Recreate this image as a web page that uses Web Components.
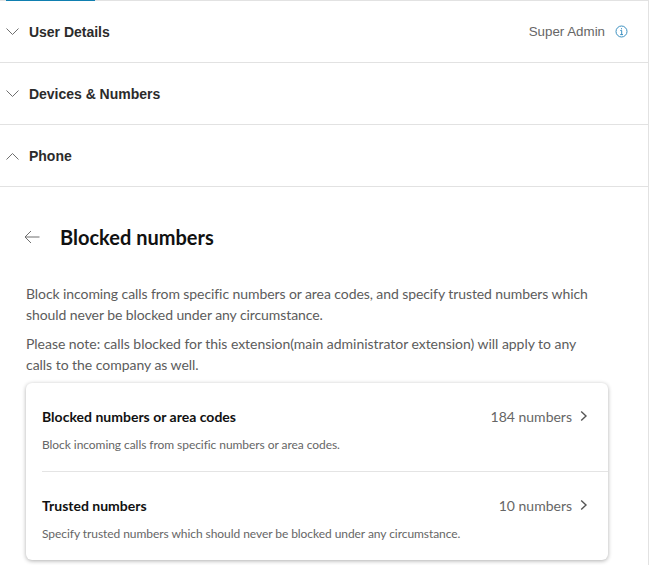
<!DOCTYPE html>
<html><head><meta charset="utf-8"><style>
html,body{margin:0;padding:0;background:#fff;overflow:hidden}
body{width:655px;height:565px}
</style></head><body>
<app-page>
  <acc-row label="User Details" dir="down"><span>Super Admin</span></acc-row>
  <acc-row label="Devices &amp; Numbers" dir="down"></acc-row>
  <acc-row label="Phone" dir="up"></acc-row>
  <blocked-panel>
    <p style="letter-spacing:-.08px">Block incoming calls from specific numbers or area codes, and specify trusted numbers which should never be blocked under any circumstance.</p>
    <p style="letter-spacing:-.035px">Please note: calls blocked for this extension(main administrator extension) will apply to any calls to the company as well.</p>
    <set-card>
      <set-item title="Blocked numbers or area codes" value="184 numbers" desc="Block incoming calls from specific numbers or area codes."></set-item>
      <set-item title="Trusted numbers" value="10 numbers" desc="Specify trusted numbers which should never be blocked under any circumstance."></set-item>
    </set-card>
  </blocked-panel>
</app-page>
<script>
function def(name,html){customElements.define(name,class extends HTMLElement{connectedCallback(){if(this.shadowRoot)return;const r=this.attachShadow({mode:'open'});r.innerHTML=typeof html==='function'?html(this):html;}});}
const esc=s=>(s||'').replace(/&/g,'&amp;').replace(/</g,'&lt;');
def('app-page',`<style>
:host{display:block;box-sizing:border-box;width:649px;height:565px;border-right:1px solid #e2e2e2;overflow:hidden}
.top{height:1px;background:#e2e2e2;padding-left:6px}
.tab{width:89px;height:1px;background:#0f7fb0}
</style><div class="top"><div class="tab"></div></div><slot></slot>`);
def('acc-row',h=>{const up=h.getAttribute('dir')==='up';const d=up?'M.5 8.5 L6.5 2.5 L12.5 8.5':'M.5 1.5 L6.5 7.5 L12.5 1.5';
const hasInfo=h.children.length>0;
return `<style>
:host{display:flex;align-items:center;box-sizing:border-box;height:62px;border-bottom:1px solid #e2e2e2;padding:0 20px 0 6px;font-family:"Liberation Sans",Arial,sans-serif}
svg.c{width:13px;height:10px;flex:none;margin-right:10px}
.l{font-size:14px;font-weight:700;color:#2b2b2b;flex:1;letter-spacing:-.02px}
.r{font-size:13.33px;color:#666;margin-right:10px}
svg.i{width:13px;height:13px;flex:none}
</style>
<svg class="c" viewBox="0 0 13 10"><path d="${d}" fill="none" stroke="#6f6f6f" stroke-width="1"/></svg>
<span class="l">${esc(h.getAttribute('label'))}</span>
${hasInfo?`<span class="r"><slot></slot></span><svg class="i" viewBox="0 0 13 13"><circle cx="6.5" cy="6.5" r="5.5" fill="none" stroke="#3a8fc0" stroke-width="1"/><path d="M5.3 5.5H6.7V9.6M5.2 9.6H8M6.5 3.2V4.3" fill="none" stroke="#3a8fc0" stroke-width="1"/></svg>`:''}`});
def('blocked-panel',`<style>
:host{display:block;padding:34px 40px 0 26px;font-family:Lato,sans-serif;color:#555}
.h{display:flex;align-items:center;height:32px;margin-bottom:30px}
svg{width:16px;height:14px;flex:none;margin-left:-2px;margin-right:20px}
h1{margin:0;font:700 20px/32px Lato,sans-serif;color:#111}
::slotted(p){margin:0 12px 8px 0;font-size:14px;line-height:21px;color:#5c5c5c}
</style>
<div class="h"><svg viewBox="0 0 16 14"><path d="M15.5 7H1M7 1L1 7L7 13" fill="none" stroke="#6f6f6f" stroke-width="1"/></svg><h1>Blocked numbers</h1></div>
<slot></slot>`);
def('set-card',`<style>
:host{display:block;background:#fff;border-radius:6px;box-shadow:0 1px 4px rgba(0,0,0,.32);padding:0 0 0 16px}
</style><slot></slot>`);
def('set-item',h=>`<style>
:host{display:block;box-sizing:border-box;height:89px;padding:23px 20px 0 0;border-bottom:1px solid #e4e4e4;font-family:Lato,sans-serif}
:host(:last-child){border-bottom:0;height:88px}
.t{display:flex;align-items:center;height:20px}
.n{flex:1;font-size:14px;font-weight:700;color:#111;letter-spacing:.01px}
.v{font-size:14px;color:#666;margin-right:8px}
svg{width:8px;height:12px;flex:none}
.d{margin-top:10px;font-size:12px;line-height:18px;color:#666;letter-spacing:-.06px}
</style><div class="t"><span class="n">${esc(h.getAttribute('title'))}</span><span class="v">${esc(h.getAttribute('value'))}</span><svg viewBox="0 0 8 12"><path d="M1.2 1.5L6 6L1.2 10.5" fill="none" stroke="#555" stroke-width="1.4"/></svg></div><div class="d">${esc(h.getAttribute('desc'))}</div>`);
</script>
</body></html>
